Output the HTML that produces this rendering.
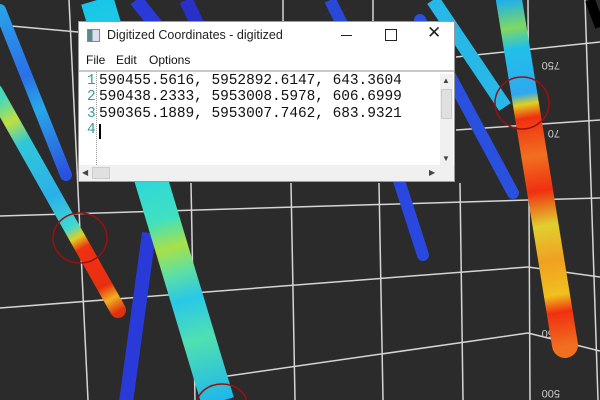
<!DOCTYPE html>
<html><head><meta charset="utf-8"><style>
html,body{margin:0;padding:0;width:600px;height:400px;overflow:hidden;background:#2b2b2b}
svg{position:absolute;left:0;top:0}
.win{position:absolute;left:78px;top:21px;width:377px;height:161px;background:#fff;border:1px solid #9a9a9a;box-sizing:border-box;font-family:"Liberation Sans",sans-serif}
.t{position:absolute;left:28px;top:6px;font-size:12.5px;color:#222}
.m{position:absolute;top:31px;font-size:12px;color:#111}
.ed{position:absolute;left:0;top:48px;width:375px;height:95px;border-top:2px solid #c8c8c8}
.ln{position:absolute;left:8px;font:14.5px "Liberation Mono",monospace;color:#3a9a9a}
.tx{position:absolute;left:20px;font:14.5px "Liberation Mono",monospace;color:#111;white-space:pre;letter-spacing:-0.05px}
</style></head><body>
<svg width="600" height="400" viewBox="0 0 600 400">
<defs>
<linearGradient id="big" gradientUnits="userSpaceOnUse" x1="97" y1="0" x2="215" y2="400">
<stop offset="0" stop-color="#19c6e8"/><stop offset=".45" stop-color="#2fd8d8"/><stop offset=".55" stop-color="#40e0c0"/><stop offset=".62" stop-color="#a8e048"/><stop offset=".68" stop-color="#60e0a0"/><stop offset=".75" stop-color="#28c8e8"/><stop offset=".85" stop-color="#50e0b0"/><stop offset="1" stop-color="#20b8e8"/></linearGradient>
<linearGradient id="lt" gradientUnits="userSpaceOnUse" x1="0" y1="100" x2="118" y2="312">
<stop offset="0" stop-color="#48d8b8"/><stop offset=".1" stop-color="#c0e040"/><stop offset=".2" stop-color="#30c8d8"/><stop offset=".45" stop-color="#2ab0e8"/><stop offset=".6" stop-color="#40d8d0"/><stop offset=".65" stop-color="#e0d020"/><stop offset=".7" stop-color="#f03010"/><stop offset=".88" stop-color="#e83010"/><stop offset=".94" stop-color="#f0b020"/><stop offset="1" stop-color="#e03010"/></linearGradient>
<linearGradient id="rt" gradientUnits="userSpaceOnUse" x1="509" y1="0" x2="565" y2="347">
<stop offset="0" stop-color="#20b0e8"/><stop offset=".08" stop-color="#80d860"/><stop offset=".14" stop-color="#20c0e8"/><stop offset=".27" stop-color="#30a8f0"/><stop offset=".3" stop-color="#e0d020"/><stop offset=".34" stop-color="#f03010"/><stop offset=".45" stop-color="#f07020"/><stop offset=".55" stop-color="#f03010"/><stop offset=".65" stop-color="#e0d030"/><stop offset=".75" stop-color="#f0a020"/><stop offset=".85" stop-color="#f0c020"/><stop offset=".9" stop-color="#f03010"/><stop offset="1" stop-color="#f07020"/></linearGradient>
<linearGradient id="lb" gradientUnits="userSpaceOnUse" x1="0" y1="10" x2="66" y2="175">
<stop offset="0" stop-color="#2aa0e8"/><stop offset=".4" stop-color="#2a70e8"/><stop offset=".6" stop-color="#28a8e8"/><stop offset="1" stop-color="#2a50e0"/></linearGradient>
</defs>
<g stroke="#e8e8e8" stroke-width="1.5" fill="none" opacity=".9">
<line x1="0" y1="25" x2="78" y2="32"/><line x1="0" y1="216" x2="528" y2="200"/><line x1="528" y1="200" x2="600" y2="198"/>
<line x1="0" y1="308" x2="528" y2="267"/><line x1="528" y1="267" x2="600" y2="277"/>
<line x1="200" y1="380" x2="528" y2="333"/><line x1="528" y1="333" x2="600" y2="351"/>
<line x1="456" y1="130" x2="600" y2="120"/><line x1="456" y1="57" x2="600" y2="42"/>
<line x1="69" y1="0" x2="88" y2="400"/><line x1="191" y1="183" x2="195" y2="400"/><line x1="291" y1="183" x2="295" y2="400"/>
<line x1="379" y1="183" x2="383" y2="400"/><line x1="460" y1="183" x2="463" y2="400"/><line x1="528" y1="0" x2="530" y2="400"/>
<line x1="585" y1="0" x2="598" y2="400"/><line x1="283" y1="0" x2="283" y2="22"/><line x1="373" y1="0" x2="373" y2="22"/>
</g>
<g fill="#ccc" font-family="Liberation Sans" font-size="11">
<text transform="translate(560,62) rotate(180)">750</text><text transform="translate(560,130) rotate(180)">70</text>
<text transform="translate(560,330) rotate(180)">650</text><text transform="translate(560,390) rotate(180)">500</text></g>
<g stroke-linecap="butt" fill="none">
<line x1="136" y1="0" x2="160" y2="30" stroke="#2a3ad8" stroke-width="14"/>
<line x1="186" y1="0" x2="200" y2="30" stroke="#2830c8" stroke-width="14"/>
<line x1="330" y1="0" x2="345" y2="30" stroke="#2a48d8" stroke-width="12"/>
<line x1="590" y1="0" x2="600" y2="27" stroke="#000" stroke-width="10"/>
<line x1="0" y1="10" x2="66" y2="175" stroke="url(#lb)" stroke-width="12" stroke-linecap="round"/>
<line x1="149" y1="233" x2="126" y2="402" stroke="#2a3ad8" stroke-width="14"/>
<line x1="97" y1="0" x2="218" y2="402" stroke="url(#big)" stroke-width="33"/>
<line x1="360" y1="60" x2="423" y2="255" stroke="#2a48e0" stroke-width="12" stroke-linecap="round"/>
<line x1="420" y1="20" x2="513" y2="193" stroke="#2a50e0" stroke-width="12" stroke-linecap="round"/>
<line x1="433" y1="0" x2="505" y2="107" stroke="#28b8e8" stroke-width="14"/>
<line x1="-5" y1="92" x2="118" y2="310" stroke="url(#lt)" stroke-width="16" stroke-linecap="round"/>
<line x1="509" y1="0" x2="565" y2="345" stroke="url(#rt)" stroke-width="26" stroke-linecap="round"/>
</g>
<g stroke="#9a1010" stroke-width="1.5" fill="none">
<ellipse cx="80" cy="238" rx="27" ry="25"/><ellipse cx="522" cy="103" rx="27" ry="26"/><ellipse cx="222" cy="404" rx="25" ry="20"/></g>
</svg>
<div class="win">
<div style="position:absolute;left:8px;top:7px;width:11px;height:11px;border:1px solid #888;background:linear-gradient(90deg,#5a8a8a 40%,#dde 40%)"></div>
<div class="t">Digitized Coordinates - digitized</div>
<div style="position:absolute;left:262px;top:13px;width:11px;height:1px;background:#222"></div>
<div style="position:absolute;left:306px;top:7px;width:10px;height:10px;border:1px solid #222"></div>
<div style="position:absolute;left:348px;top:1px;font-size:17px;color:#222">✕</div>
<div class="m" style="left:7px">File</div><div class="m" style="left:37px">Edit</div><div class="m" style="left:70px">Options</div>
<div class="ed">
<div style="position:absolute;left:17px;top:0;height:95px;border-left:1px dotted #999"></div>
<div class="ln" style="top:1px">1</div><div class="ln" style="top:17px">2</div><div class="ln" style="top:34px">3</div><div class="ln" style="top:50px">4</div>
<div class="tx" style="top:1px">590455.5616, 5952892.6147, 643.3604</div>
<div class="tx" style="top:17px">590438.2333, 5953008.5978, 606.6999</div>
<div class="tx" style="top:34px">590365.1889, 5953007.7462, 683.9321</div>
<div style="position:absolute;left:20px;top:52px;width:2px;height:15px;background:#000"></div>
<div style="position:absolute;left:361px;top:2px;width:13px;height:91px;background:#f0f0f0"><div style="position:absolute;left:1px;top:15px;width:11px;height:30px;background:#e0e0e0;border:1px solid #ccc;box-sizing:border-box"></div>
<div style="position:absolute;left:2px;top:2px;font-size:8px;color:#444">▲</div><div style="position:absolute;left:2px;top:80px;font-size:8px;color:#444">▼</div></div>
</div>
<div style="position:absolute;left:0;top:143px;width:375px;height:16px;background:#f0f0f0"><div style="position:absolute;left:3px;top:3px;font-size:8px;color:#444">◀</div><div style="position:absolute;left:13px;top:2px;width:18px;height:12px;background:#e0e0e0;border:1px solid #ccc;box-sizing:border-box"></div><div style="position:absolute;left:350px;top:3px;font-size:8px;color:#444">▶</div></div>
</div>
</body></html>
